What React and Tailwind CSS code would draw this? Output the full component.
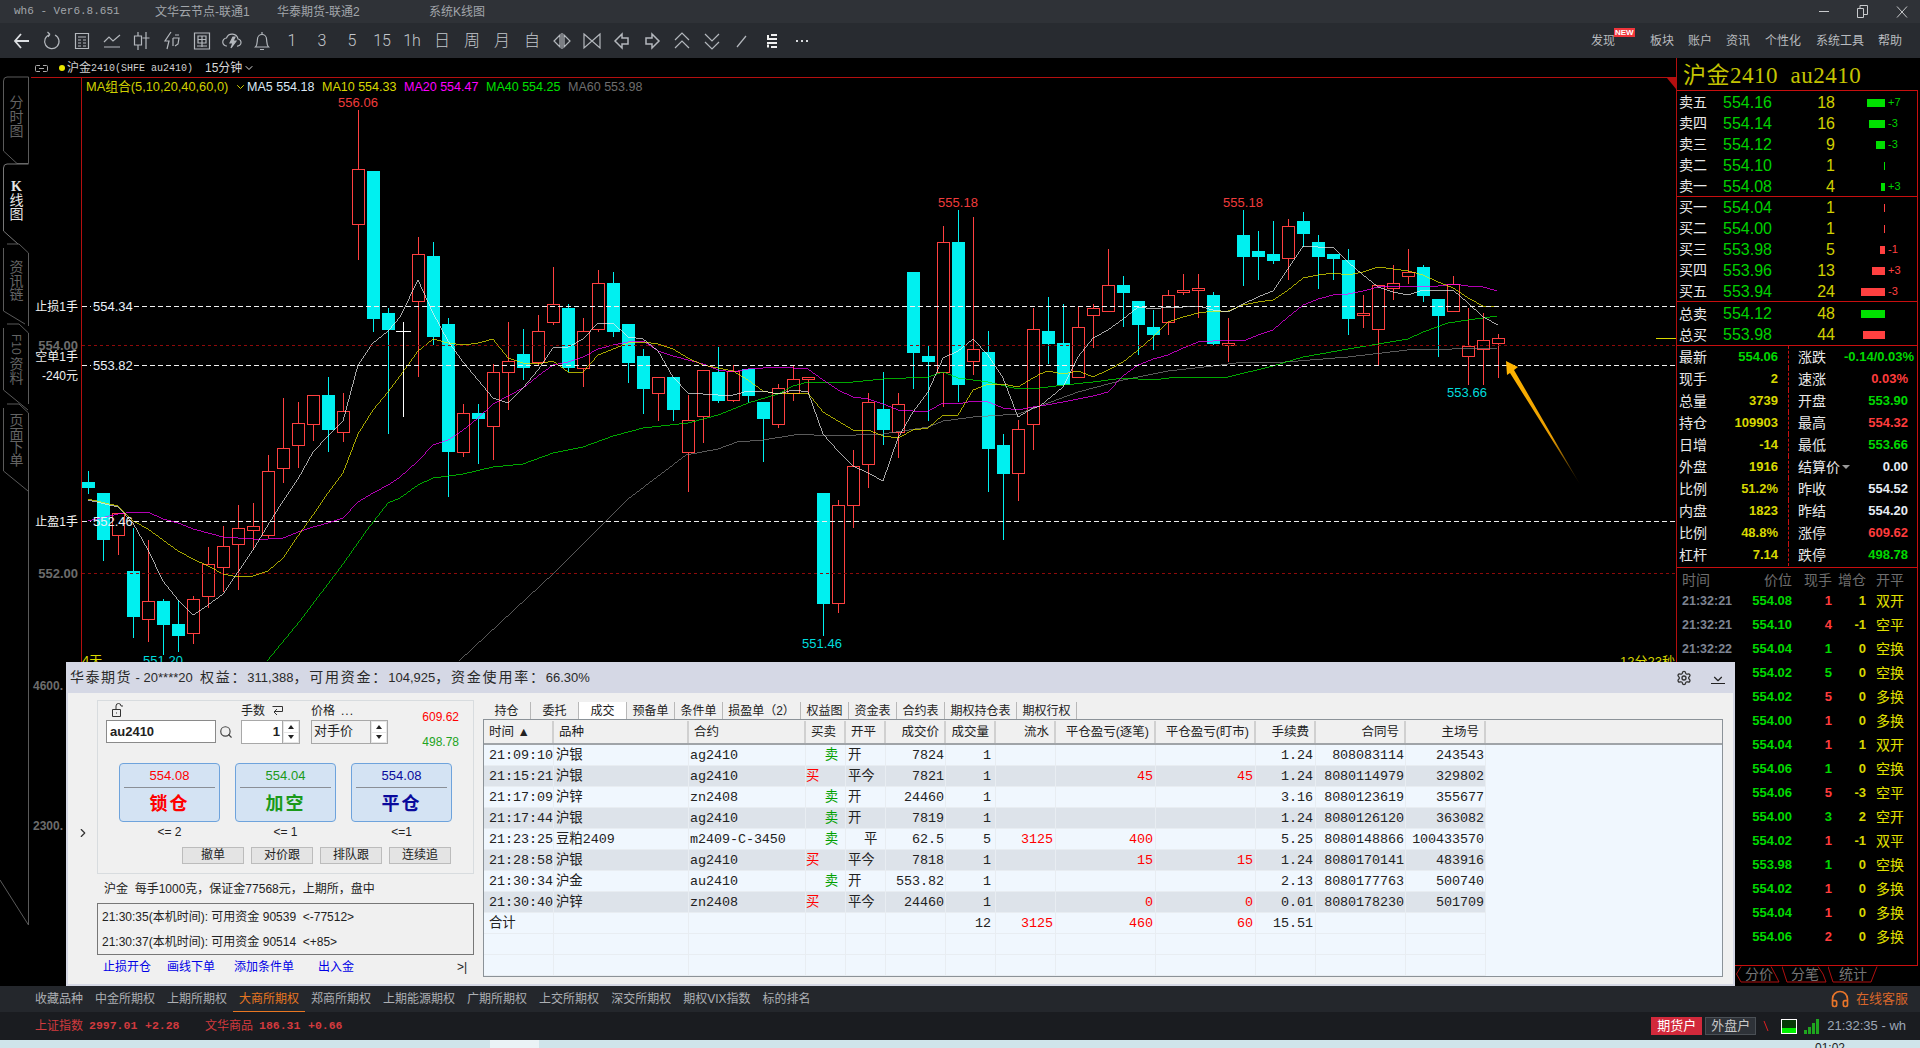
import React from 'react';
import { Settings, Search, ChevronRight, ChevronDown, Headphones } from 'lucide-react';

// candle data: [center x, type, body top, body bottom, high, low]
const candles = [
  [88, 'c', 482, 488, 471, 494], [103, 'c', 493, 540, 493, 561], [118, 'r', 513, 535, 513, 555], [133, 'c', 571, 617, 528, 638],
  [148, 'r', 601, 619, 540, 642], [163, 'c', 601, 625, 599, 655], [178, 'c', 624, 636, 600, 652], [193, 'r', 599, 633, 596, 644],
  [208, 'r', 564, 596, 547, 608], [223, 'r', 546, 567, 526, 592], [238, 'r', 528, 544, 505, 590], [253, 'r', 526, 530, 503, 550],
  [268, 'r', 471, 535, 455, 538], [283, 'r', 448, 468, 398, 483], [298, 'r', 423, 445, 402, 468], [313, 'r', 395, 424, 395, 441],
  [328, 'c', 395, 430, 377, 452], [343, 'r', 411, 432, 393, 442], [358, 'r', 169, 224, 110, 260], [373, 'c', 171, 319, 171, 332],
  [388, 'c', 313, 330, 308, 434],
  [418, 'r', 254, 301, 237, 377], [433, 'c', 256, 337, 242, 345], [448, 'c', 324, 452, 318, 497], [463, 'r', 413, 452, 404, 457],
  [478, 'c', 413, 419, 404, 464], [493, 'r', 372, 426, 364, 460], [508, 'r', 361, 372, 322, 410], [523, 'c', 354, 368, 329, 380],
  [538, 'r', 331, 362, 315, 366], [553, 'r', 304, 322, 267, 325], [568, 'c', 308, 368, 304, 372], [583, 'r', 331, 368, 318, 387],
  [598, 'r', 283, 329, 270, 332], [613, 'c', 283, 332, 272, 337], [628, 'c', 324, 363, 324, 383], [643, 'c', 356, 389, 349, 414],
  [658, 'r', 377, 393, 377, 421], [673, 'c', 377, 410, 377, 421], [688, 'r', 420, 452, 395, 492], [703, 'r', 370, 416, 370, 443],
  [718, 'c', 372, 401, 347, 403], [733, 'r', 371, 400, 365, 402], [748, 'c', 369, 396, 369, 403], [763, 'c', 402, 419, 402, 462],
  [778, 'r', 388, 424, 384, 428], [793, 'r', 379, 393, 366, 401], [808, 'r', 377, 379, 377, 394], [823, 'c', 493, 604, 493, 636],
  [838, 'r', 505, 603, 500, 613], [853, 'r', 466, 505, 450, 528], [868, 'r', 402, 464, 393, 488], [883, 'c', 409, 430, 372, 445],
  [898, 'r', 404, 432, 393, 458], [913, 'c', 272, 353, 272, 389], [928, 'c', 356, 362, 345, 421], [943, 'r', 242, 372, 226, 407],
  [958, 'c', 242, 385, 210, 402], [973, 'r', 349, 361, 217, 375], [988, 'c', 352, 449, 331, 492], [1003, 'c', 445, 474, 434, 540],
  [1018, 'r', 429, 473, 420, 501], [1033, 'r', 329, 424, 308, 450], [1048, 'c', 331, 344, 297, 364], [1063, 'c', 343, 385, 304, 385],
  [1078, 'r', 327, 377, 307, 377], [1093, 'r', 308, 315, 304, 348], [1108, 'r', 285, 311, 249, 311], [1123, 'c', 285, 293, 276, 327],
  [1138, 'c', 301, 325, 301, 355], [1153, 'c', 327, 335, 310, 350], [1168, 'r', 295, 322, 290, 335], [1183, 'r', 290, 292, 274, 295],
  [1198, 'r', 288, 290, 274, 318], [1213, 'c', 295, 344, 292, 345], [1228, 'r', 343, 345, 318, 362], [1243, 'c', 235, 257, 210, 286],
  [1258, 'c', 251, 257, 231, 280], [1273, 'c', 254, 261, 221, 264], [1288, 'r', 226, 258, 219, 280], [1303, 'c', 221, 234, 212, 247],
  [1318, 'c', 242, 257, 235, 289], [1333, 'c', 254, 259, 254, 280], [1348, 'c', 260, 319, 249, 335], [1363, 'r', 313, 315, 295, 328],
  [1378, 'r', 285, 329, 285, 366], [1393, 'r', 283, 288, 265, 300], [1408, 'r', 272, 276, 249, 284], [1423, 'c', 267, 296, 265, 302],
  [1438, 'c', 299, 316, 299, 357], [1453, 'r', 284, 311, 276, 311], [1468, 'r', 346, 356, 308, 385], [1483, 'r', 340, 349, 313, 385],
  [1498, 'r', 338, 343, 334, 378],
];

const ma5 = '88,500 118,507 133,523 148,550 163,581 178,600 193,615 208,605 223,594 238,572 253,550 268,525 283,501 298,479 313,452 328,436 343,421 358,365 373,343 388,331 400,317 418,280 433,313 448,341 463,362 478,380 493,398 508,403 523,388 538,370 553,348 568,347 583,339 598,323 613,323 628,337 643,339 658,351 673,377 688,393 703,394 718,395 733,395 748,391 763,391 778,394 793,390 808,392 823,434 838,451 853,466 868,473 883,481 898,438 913,412 928,392 943,358 958,351 973,339 988,355 1003,378 1018,417 1033,408 1040,406 1063,387 1078,357 1093,338 1108,330 1123,319 1138,307 1153,309 1168,307 1183,307 1198,306 1213,310 1228,312 1243,304 1258,297 1273,291 1288,269 1303,246 1318,247 1333,247 1348,262 1363,275 1378,287 1393,292 1408,295 1423,290 1438,290 1453,290 1468,303 1483,317 1498,325';
const ma10 = '88,499 118,506 133,521 148,529 163,540 178,551 193,559 208,566 223,574 238,577 253,576 268,571 283,558 298,536 313,515 328,493 343,473 358,434 373,410 388,392 400,376 418,351 433,339 448,343 463,345 478,343 493,339 508,358 523,363 538,364 553,361 568,372 583,372 598,355 613,349 628,343 643,342 658,344 673,349 688,358 703,365 718,368 733,371 748,380 763,391 778,394 793,393 808,393 823,412 838,421 853,430 868,430 883,436 898,438 913,430 928,428 943,415 958,415 973,390 988,384 1003,384 1018,387 1033,378 1040,374 1048,371 1063,374 1078,371 1093,377 1108,370 1123,362 1138,350 1153,337 1168,322 1183,317 1198,313 1213,311 1228,311 1243,305 1258,302 1273,300 1288,290 1303,278 1318,275 1333,273 1348,275 1363,272 1378,267 1393,269 1408,271 1423,275 1438,282 1453,288 1468,298 1483,306 1497,307';
const ma20 = '88,521 118,514 133,512 148,512 163,519 178,523 193,529 208,533 223,537 238,538 253,539 268,539 283,538 298,532 313,527 328,523 343,518 358,502 373,493 388,485 400,477 418,461 433,445 448,440 463,430 478,418 493,404 508,396 523,388 538,376 553,365 568,362 583,357 598,349 613,345 628,342 643,341 658,351 673,356 688,360 703,364 718,370 733,372 748,369 763,368 778,367 793,368 808,369 823,380 838,390 853,397 868,399 883,404 898,410 913,411 928,411 943,403 958,404 973,401 988,402 1003,408 1018,410 1033,407 1040,406 1063,402 1078,399 1093,396 1108,392 1123,376 1138,365 1153,359 1168,355 1183,348 1198,342 1213,341 1228,340 1243,341 1258,335 1273,330 1288,317 1303,305 1318,299 1333,295 1348,294 1363,291 1378,287 1393,286 1408,286 1423,286 1438,286 1453,284 1468,286 1483,287 1497,291';
const ma40 = '267,661 300,621 343,564 367,530 388,503 400,498 418,485 433,478 463,474 493,467 523,464 553,453 583,447 613,436 643,428 688,423 718,415 748,403 778,394 793,386 808,382 853,382 883,379 928,377 943,372 958,378 988,382 1018,389 1040,388 1064,385 1093,382 1123,378 1153,380 1177,377 1228,377 1273,366 1303,357 1348,349 1378,344 1408,339 1423,332 1448,323 1468,320 1497,316';
const ma60 = '459,661 555,572 628,499 686,455 718,449 737,442 763,440 800,434 828,436 883,434 928,427 943,421 973,417 1018,414 1040,406 1078,392 1123,380 1168,371 1213,366 1243,362 1285,362 1348,357 1407,350 1497,348';

const asks = [
  ['卖五', '554.16', '18', 'w-[18px]', '+7', true], ['卖四', '554.14', '16', 'w-[16px]', '-3', true], ['卖三', '554.12', '9', 'w-[9px]', '-3', true],
  ['卖二', '554.10', '1', 'w-[1px]', '', true], ['卖一', '554.08', '4', 'w-[4px]', '+3', true],
];
const bids = [
  ['买一', '554.04', '1', 'w-[1px]', '', false], ['买二', '554.00', '1', 'w-[1px]', '', false], ['买三', '553.98', '5', 'w-[5px]', '-1', false],
  ['买四', '553.96', '13', 'w-[13px]', '+3', false], ['买五', '553.94', '24', 'w-[24px]', '-3', false],
];
const totals = [['总卖', '554.12', '48', 'w-[24px]', '', true], ['总买', '553.98', '44', 'w-[22px]', '', false]];

const G = 'text-[#00d800]', R = 'text-[#ff3c3c]', Y = 'text-[#d8d800]', W = 'text-[#e6ecf4]';
const stats = [
  ['最新', '554.06', G, '涨跌', '-0.14/0.03%', G], ['现手', '2', Y, '速涨', '0.03%', R], ['总量', '3739', Y, '开盘', '553.90', G],
  ['持仓', '109903', Y, '最高', '554.32', R], ['日增', '-14', Y, '最低', '553.66', G], ['外盘', '1916', Y, '结算价', '0.00', W],
  ['比例', '51.2%', Y, '昨收', '554.52', W], ['内盘', '1823', Y, '昨结', '554.20', W], ['比例', '48.8%', Y, '涨停', '609.62', R],
  ['杠杆', '7.14', Y, '跌停', '498.78', G],
];

const trades = [
  ['21:32:21', '554.08', '1', R, '1', '双开'], ['21:32:21', '554.10', '4', R, '-1', '空平'], ['21:32:22', '554.04', '1', G, '0', '空换'],
  ['', '554.02', '5', G, '0', '空换'], ['', '554.02', '5', R, '0', '多换'], ['', '554.00', '1', R, '0', '多换'], ['', '554.04', '1', R, '1', '双开'],
  ['', '554.06', '1', G, '0', '空换'], ['', '554.06', '5', R, '-3', '空平'], ['', '554.00', '3', G, '2', '空开'], ['', '554.02', '1', R, '-1', '双平'],
  ['', '553.98', '1', G, '0', '空换'], ['', '554.02', '1', R, '0', '多换'], ['', '554.04', '1', R, '0', '多换'], ['', '554.06', '2', R, '0', '多换'],
];

const columns = [
  { w: 'w-[70px]', c: 'text-left pl-[5px]', h: 'text-left pl-[5px]' },
  { w: 'w-[135px]', c: 'text-left pl-[2px]', h: 'text-left pl-[5px]' },
  { w: 'w-[117px]', c: 'text-left pl-[1px]', h: 'text-left pl-[5px]' },
  { w: 'w-[40px]', c: 'text-left', h: 'text-left pl-[5px]' },
  { w: 'w-[40px]', c: 'text-left pl-[2px]', h: 'text-left pl-[5px]' },
  { w: 'w-[60px]', c: 'text-right pr-[1px]', h: 'text-right pr-[5px]' },
  { w: 'w-[50px]', c: 'text-right pr-[4px]', h: 'text-right pr-[5px]' },
  { w: 'w-[60px]', c: 'text-right pr-[2px] text-[#ff0000]', h: 'text-right pr-[5px]' },
  { w: 'w-[100px]', c: 'text-right pr-[2px] text-[#ff0000]', h: 'text-right pr-[5px]' },
  { w: 'w-[100px]', c: 'text-right pr-[2px] text-[#ff0000]', h: 'text-right pr-[5px]' },
  { w: 'w-[60px]', c: 'text-right pr-[2px]', h: 'text-right pr-[5px]' },
  { w: 'w-[90px]', c: 'text-right pr-[1px]', h: 'text-right pr-[5px]' },
  { w: 'w-[80px]', c: 'text-right pr-[1px]', h: 'text-right pr-[5px]' },
];
const headers = ['时间 ▲', '品种', '合约', '买卖', '开平', '成交价', '成交量', '流水', '平仓盈亏(逐笔)', '平仓盈亏(盯市)', '手续费', '合同号', '主场号'];
const fills = [
  ['21:09:10', '沪银', 'ag2410', '卖', '开', '7824', '1', '', '', '', '1.24', '808083114', '243543'],
  ['21:15:21', '沪银', 'ag2410', '买', '平今', '7821', '1', '', '45', '45', '1.24', '8080114979', '329802'],
  ['21:17:09', '沪锌', 'zn2408', '卖', '开', '24460', '1', '', '', '', '3.16', '8080123619', '355677'],
  ['21:17:44', '沪银', 'ag2410', '卖', '开', '7819', '1', '', '', '', '1.24', '8080126120', '363082'],
  ['21:23:25', '豆粕2409', 'm2409-C-3450', '卖', '平', '62.5', '5', '3125', '400', '', '5.25', '8080148866', '100433570'],
  ['21:28:58', '沪银', 'ag2410', '买', '平今', '7818', '1', '', '15', '15', '1.24', '8080170141', '483916'],
  ['21:30:34', '沪金', 'au2410', '卖', '开', '553.82', '1', '', '', '', '2.13', '8080177763', '500740'],
  ['21:30:40', '沪锌', 'zn2408', '买', '平今', '24460', '1', '', '0', '0', '0.01', '8080178230', '501709'],
  ['合计', '', '', '', '', '', '12', '3125', '460', '60', '15.51', '', ''],
  ['', '', '', '', '', '', '', '', '', '', '', '', ''],
  ['', '', '', '', '', '', '', '', '', '', '', '', ''],
];

const tabs = [
  ['持仓', 'w-[48px]'], ['委托', 'w-[48px]'], ['成交', 'w-[48px]'], ['预备单', 'w-[48px]'], ['条件单', 'w-[48px]'], ['损盈单（2）', 'w-[78px]'],
  ['权益图', 'w-[48px]'], ['资金表', 'w-[48px]'], ['合约表', 'w-[48px]'], ['期权持仓表', 'w-[72px]'], ['期权行权', 'w-[60px]'],
];

const navItems = ['收藏品种', '中金所期权', '上期所期权', '大商所期权', '郑商所期权', '上期能源期权', '广期所期权', '上交所期权', '深交所期权', '期权VIX指数', '标的排名'];

// toolbar icons, drawn on a 20x20 grid
const ToolIcon = ({ children }) => (
  <svg width="20" height="20" viewBox="0 0 20 20" fill="none" stroke="#b4b8bd" strokeWidth="1.2">{children}</svg>
);

const toolbar = [
  <ToolIcon key="a"><path d="M17 10H3M9 3l-6 7 6 7" stroke="#dcdfe2" strokeWidth="1.8" /></ToolIcon>,
  <ToolIcon key="b"><path d="M8 3.5A7.2 7.2 0 1 0 13 4M8 3.5L5.5 1M8 3.5L6 6" /></ToolIcon>,
  <ToolIcon key="c"><path d="M3.5 2.5h13v15h-13zM6 6h8M6 9h3M11 9h3M6 12h3M11 12h3M6 15h3M11 15h3" /></ToolIcon>,
  <ToolIcon key="d"><path d="M2 11l5-5 4 4 7-6M2 16h16" /></ToolIcon>,
  <ToolIcon key="e"><path d="M6 1v4M6 14v5M2.5 5h7v9h-7zM14 1v3M14 12v6M14 4v8M10.500 7h7" /></ToolIcon>,
  <ToolIcon key="f"><path d="M9 1L3 10h4l-2 8M13 4h4M11 7h6l-1 6-3 2M11 7v8" /></ToolIcon>,
  <ToolIcon key="g"><path d="M2.500 2h15v16h-15zM6 5h8v7H6zM6 8.500h8M10 5v11M5 15h10" /></ToolIcon>,
  <ToolIcon key="h"><path d="M5 15a4 4 0 0 1-.5-8A6 6 0 0 1 16 8a3.500 3.500 0 0 1-1 7" /><path d="M11 6l-3 6h3l-2 5 5-7h-3l2-4z" fill="#b4b8bd" /></ToolIcon>,
  <ToolIcon key="i"><path d="M3.500 16c2-2 1.500-5 2-8a4.500 4.500 0 0 1 9 0c.5 3 0 6 2 8zM8 18.500h4M10 1v2" /></ToolIcon>,
  '1', '3', '5', '15', '1h', '日', '周', '月', '自',
  <ToolIcon key="j"><path d="M8 4L2 10l6 6zM12 4l6 6-6 6zM10 2v16" /></ToolIcon>,
  <ToolIcon key="k"><path d="M2 3l8 7-8 7zM18 3l-8 7 8 7z" /></ToolIcon>,
  <ToolIcon key="l"><path d="M10 3l-7 7 7 7v-4h6V7h-6z" strokeWidth="1.5" /></ToolIcon>,
  <ToolIcon key="m"><path d="M10 3l7 7-7 7v-4H4V7h6z" strokeWidth="1.5" /></ToolIcon>,
  <ToolIcon key="n"><path d="M3 9l7-7 7 7M3 17l7-7 7 7" /></ToolIcon>,
  <ToolIcon key="o"><path d="M3 3l7 7 7-7M3 11l7 7 7-7" /></ToolIcon>,
  <ToolIcon key="p"><path d="M5 16l9-11" /></ToolIcon>,
  <ToolIcon key="q"><path d="M9 4h6M5 8h10M5 12h10M9 16h6" stroke="#f0f0f0" strokeWidth="2" /><path d="M5 5.500h2M5 15h2" stroke="#f0f0f0" strokeWidth="3" /></ToolIcon>,
  <ToolIcon key="r"><path d="M4 10h2M9 10h2M14 10h2" stroke="#d8dadd" strokeWidth="2" /></ToolIcon>,
];

const Candle = ({ d }) => {
  const [x, type, top, bot, hi, lo] = d;
  if (type === 'c') {
    return (
      <g fill="#00f0f0">
        <rect x={x} y={hi} width="1" height={lo - hi} />
        <rect x={x - 6} y={top} width="13" height={bot - top} />
      </g>
    );
  }
  return (
    <g stroke="#ff4040" fill="none">
      <path d={`M${x + 0.5} ${hi}V${top}M${x + 0.5} ${bot}V${lo}`} />
      <rect x={x - 5.5} y={top + 0.5} width="12" height={Math.max(bot - top, 2)} fill="#000" />
    </g>
  );
};

const ChartCanvas = () => (
  <svg className="absolute inset-0" width="1677" height="928" viewBox="0 58 1677 928" fontSize="12">
    <defs>
      <linearGradient id="arrowFade" x1="1508" y1="365" x2="1581" y2="486" gradientUnits="userSpaceOnUse">
        <stop offset="0" stopColor="#ffb400" />
        <stop offset="0.6" stopColor="#e89c00" />
        <stop offset="1" stopColor="#000" />
      </linearGradient>
    </defs>

    {/* side tabs */}
    <g stroke="#5a5a5a" fill="none">
      <path d="M3.500 81Q3.500 77 7 77H28.500V163.500H17L3.500 151Z" />
      <path d="M28.500 164H7Q3.500 164 3.500 168V231L18 244" stroke="#777" />
      <path d="M7 244H19L28.500 253V326M3.500 248V311L25 324" />
      <path d="M7 324H19L28.500 333V404M3.500 328V390L28 410" />
      <path d="M7 404H19L28.500 413V925L0 880M3.500 408V471L28 491" />
    </g>
    <g fill="#636363" fontSize="14" textAnchor="middle">
      <text x="16.500" y="107">分</text><text x="16.500" y="122">时</text><text x="16.500" y="136">图</text>
      <text x="16.500" y="191" fill="#e6e6e6" fontWeight="700" fontFamily="'Liberation Serif',serif">K</text><text x="16.500" y="205" fill="#e6e6e6">线</text><text x="16.500" y="219" fill="#e6e6e6">图</text>
      <text x="16.500" y="272">资</text><text x="16.500" y="286">讯</text><text x="16.500" y="299">链</text>
      <text transform="translate(12 334) rotate(90)" fontSize="12" textAnchor="start">F10</text><text x="16.500" y="369">资</text><text x="16.500" y="383">料</text>
      <text x="16.500" y="425">页</text><text x="16.500" y="439">面</text><text x="16.500" y="452">下</text><text x="16.500" y="465">单</text>
    </g>
    <text x="33" y="690" fill="#6c6c6c" fontWeight="700">4600.</text>
    <text x="33" y="830" fill="#6c6c6c" fontWeight="700">2300.</text>

    {/* frame */}
    <g stroke="#b40f0f" shapeRendering="crispEdges">
      <path d="M31 77.500H1677M81.500 77V662M1676.500 58V986" />
    </g>
    <path d="M1667 78H1676V89Z" fill="#b40f0f" />
    <path d="M1656 338.500H1676" stroke="#d8d800" shapeRendering="crispEdges" />

    <g shapeRendering="crispEdges">
      {candles.map((d) => <Candle key={d[0]} d={d} />)}
      <path d="M403.500 322V417M396 331.500H411" stroke="#fff" />
    </g>

    <g fill="none" strokeWidth="0.7" shapeRendering="crispEdges">
      <polyline points={ma60} stroke="#808080" />
      <polyline points={ma40} stroke="#00ee00" />
      <polyline points={ma20} stroke="#ff00ff" />
      <polyline points={ma10} stroke="#eeee00" />
      <polyline points={ma5} stroke="#f0f0f0" />
    </g>

    <g shapeRendering="crispEdges">
      <path d="M82 306.500H91M134 306.500H1677M82 365.500H91M134 365.500H1677M82 521.500H91M134 521.500H1677" stroke="#f0f0f0" strokeDasharray="5 3" />
      <path d="M82 345.500H1677M82 573.500H1677" stroke="#8e0a0a" strokeDasharray="3 3" />
    </g>

    <polygon points="1506,361 1518,367 1514,370 1581,486 1510,373 1507,375" fill="url(#arrowFade)" />

    {/* price labels */}
    <g fontSize="13">
      <text x="358" y="107" textAnchor="middle" fill="#f03c3c">556.06</text>
      <text x="958" y="207" textAnchor="middle" fill="#f03c3c">555.18</text>
      <text x="1243" y="207" textAnchor="middle" fill="#f03c3c">555.18</text>
      <text x="822" y="648" textAnchor="middle" fill="#00dcdc">551.46</text>
      <text x="1467" y="397" textAnchor="middle" fill="#00dcdc">553.66</text>
      <text x="163" y="665" textAnchor="middle" fill="#00dcdc">551.20</text>
      <text x="82" y="665" fill="#d8d800">4天</text>
      <text x="1620" y="666" fill="#d8d800">12分23秒</text>
      <text x="78" y="311" fontSize="12" textAnchor="end" fill="#f0f0f0">止损1手</text>
      <text x="93" y="311" fill="#e8f0f8">554.34</text>
      <text x="78" y="350" textAnchor="end" fill="#6c6c6c" fontWeight="700">554.00</text>
      <text x="78" y="361" fontSize="12" textAnchor="end" fill="#f0f0f0">空单1手</text>
      <text x="93" y="370" fill="#e8f0f8">553.82</text>
      <text x="78" y="380" fontSize="12" textAnchor="end" fill="#f0f0f0">-240元</text>
      <text x="78" y="526" fontSize="12" textAnchor="end" fill="#f0f0f0">止盈1手</text>
      <text x="93" y="526" fill="#e8f0f8">552.46</text>
      <text x="78" y="578" textAnchor="end" fill="#6c6c6c" fontWeight="700">552.00</text>
    </g>
  </svg>
);

const QuoteRow = ({ r }) => (
  <div className="flex h-[21px] shrink-0 items-center">
    <span className="w-[46px] pl-[2px] text-[14px] text-[#e8e8e8]">{r[0]}</span>
    <span className="w-[68px] text-[16px] text-[#00d000]">{r[1]}</span>
    <span className="w-[44px] text-right text-[16px] text-[#d0d000]">{r[2]}</span>
    <span className="flex w-[50px] justify-end">
      <span className={`h-[8px] ${r[3]} ${r[5] ? 'bg-[#00e000]' : 'bg-[#ff4040]'}`} />
    </span>
    <span className={`ml-[3px] text-[11px] ${r[5] ? 'text-[#00d000]' : 'text-[#ff4040]'}`}>{r[4]}</span>
  </div>
);

const RightPanel = () => (
  <div className="flex w-[243px] flex-col">
    <div className="h-[32px] shrink-0 pl-[6px] font-['Liberation_Serif','Noto_Sans_CJK_SC',serif] text-[23px] leading-[35px] tracking-[0.5px] whitespace-pre text-[#c4c400]">
      沪金2410  au2410
    </div>
    <div className="mr-[2px] flex h-[876px] shrink-0 flex-col border border-l-0 border-[#c80f0f]">
      <div className="flex h-[106px] shrink-0 flex-col justify-center border-b border-[#c80f0f] pt-[2px]">
        {asks.map((r) => <QuoteRow key={r[0]} r={r} />)}
      </div>
      <div className="flex h-[105px] shrink-0 flex-col justify-center border-b border-[#c80f0f] pt-[1px]">
        {bids.map((r) => <QuoteRow key={r[0]} r={r} />)}
      </div>
      <div className="flex h-[44px] shrink-0 flex-col justify-center border-b border-[#c80f0f] pt-[2px]">
        {totals.map((r) => <QuoteRow key={r[0]} r={r} />)}
      </div>
      <div className="flex h-[222px] shrink-0 flex-col border-b border-[#c80f0f]">
        {stats.map((s, i) => (
          <div key={i} className="flex h-[22px] shrink-0 items-center">
            <span className="w-[46px] pl-[2px] text-[14px] text-[#e8e8e8]">{s[0]}</span>
            <span className={`w-[55px] text-right text-[13px] font-bold ${s[2]}`}>{s[1]}</span>
            <span className="ml-[10px] h-full w-[10px] border-l border-dashed border-[#c80f0f]" />
            <span className="flex w-[46px] items-center text-[14px] whitespace-nowrap text-[#e8e8e8]">
              {s[3]}
              {s[3] === '结算价' && <span className="ml-[2px] border-x-[4px] border-t-[4px] border-x-transparent border-t-[#999]" />}
            </span>
            <span className={`w-[64px] text-right text-[13px] font-bold whitespace-nowrap ${s[5]}`}>{s[4]}</span>
          </div>
        ))}
      </div>
      <div className="flex h-[21px] shrink-0 items-center pt-[3px] text-[14px] text-[#6e6e6e]">
        <span className="w-[44px] pl-[5px]">时间</span>
        <span className="w-[71px] text-right">价位</span>
        <span className="w-[40px] text-right">现手</span>
        <span className="w-[34px] text-right">增仓</span>
        <span className="pl-[10px]">开平</span>
      </div>
      {trades.map((t, i) => (
        <div key={i} className="flex h-[24px] shrink-0 items-center text-[13px] font-bold">
          <span className="w-[59px] pl-[5px] text-[12.500px] text-[#7d8492]">{t[0]}</span>
          <span className="w-[56px] text-right text-[#00d800]">{t[1]}</span>
          <span className={`w-[40px] text-right ${t[3]}`}>{t[2]}</span>
          <span className="w-[34px] text-right text-[#d8d800]">{t[4]}</span>
          <span className="pl-[10px] text-[14px] font-normal text-[#e0e000]">{t[5]}</span>
        </div>
      ))}
    </div>
    <div className="flex h-[20px] items-start pl-[59px] text-[14px] text-[#757575]">
      <span className="relative w-[46px] text-center leading-[16px]">
        <svg className="absolute inset-0" width="46" height="17" fill="none" stroke="#b01010"><path d="M5 .5L.5 8 5 16H43L39 8 35 .5" /></svg>
        分价
      </span>
      <span className="relative w-[46px] text-center leading-[16px]">
        <svg className="absolute inset-0" width="46" height="17" fill="none" stroke="#b01010"><path d="M0 .5L5 16H44L41 8 36 .5" /></svg>
        分笔
      </span>
      <span className="relative w-[50px] text-center leading-[16px]">
        <svg className="absolute inset-0" width="50" height="17" fill="none" stroke="#b01010"><path d="M0 .5L5 16H43L49 .5" /></svg>
        统计
      </span>
    </div>
  </div>
);

const Spinner = ({ w, children }) => (
  <div className={`flex h-[24px] ${w} border border-[#a8a8a8] bg-white`}>
    <div className="flex-1">{children}</div>
    <div className="flex w-[17px] flex-col gap-[1px] border-l border-[#a8a8a8] bg-[#e6e6e6] p-[1px]">
      <span className="flex flex-1 items-center justify-center bg-white">
        <span className="border-x-[3px] border-b-[4px] border-x-transparent border-b-[#222]" />
      </span>
      <span className="flex flex-1 items-center justify-center bg-white">
        <span className="border-x-[3px] border-t-[4px] border-x-transparent border-t-[#222]" />
      </span>
    </div>
  </div>
);

const OrderButton = ({ price, label, color }) => (
  <div className="flex h-[59px] w-[101px] flex-col rounded-[4px] border border-[#6ea3dc] bg-[#d4e3f3]">
    <div className={`h-[23px] text-center text-[13px] leading-[24px] ${color}`}>{price}</div>
    <div className="mx-[4px] h-[1px] bg-[#8a8f96]" />
    <div className={`flex-1 text-center text-[18px] leading-[32px] font-bold tracking-[2px] ${color}`}>{label}</div>
  </div>
);

const OrderForm = () => (
  <div className="flex w-[415px] text-[12px] text-[#222]">
    <div className="flex w-[29px] justify-center pt-[133px]">
      <ChevronRight size={14} color="#333" />
    </div>
    <div className="w-[377px] pt-[7px]">
      <div className="h-[174px] border border-[#d8dcdf]">
        <div className="flex h-[43px] pl-[8px]">
          <div className="w-[135px]">
            <svg className="mt-[2px] ml-[5px]" width="14" height="15" viewBox="0 0 14 15" fill="none" stroke="#333">
              <path d="M1.500 6.500h8v7h-8zM5 10h1M5 6V3a2.500 2.500 0 0 1 5 0h2" />
            </svg>
            <div className="mt-[2px] flex items-center">
              <div className="h-[23px] w-[110px] border border-[#8a8a8a] bg-white pl-[3px] text-[13px] leading-[21px] font-bold">au2410</div>
              <Search size={14} color="#444" strokeWidth={2} className="ml-[3px]" />
            </div>
          </div>
          <div className="w-[70px]">
            <div className="flex h-[19px] items-center gap-[6px]">
              手数
              <svg width="13" height="11" viewBox="0 0 13 11" fill="none" stroke="#333"><path d="M1.500 1.500h10v5H4M6 4L3 7l3 3" /></svg>
            </div>
            <Spinner w="w-[59px]">
              <div className="pr-[2px] text-right text-[13px] leading-[22px] font-bold">1</div>
            </Spinner>
          </div>
          <div className="w-[77px]">
            <div className="flex h-[19px] items-center gap-[6px]">价格 <span className="tracking-[1px]">...</span></div>
            <Spinner w="w-[77px]">
              <div className="h-full bg-[#f0f0f0] pl-[2px] text-[13px] leading-[20px]">对手价</div>
            </Spinner>
          </div>
          <div className="w-[71px] pt-[9px] text-right text-[12px] leading-[14px]">
            <div className="text-[#ff0000]">609.62</div>
            <div className="mt-[11px] text-[#22a322]">498.78</div>
          </div>
        </div>
        <div className="mt-[19px] flex gap-[15px] pl-[21px]">
          <OrderButton price="554.08" label="锁仓" color="text-[#ff0000]" />
          <OrderButton price="554.04" label="加空" color="text-[#1a9a1a]" />
          <OrderButton price="554.08" label="平仓" color="text-[#0a0a9c]" />
        </div>
        <div className="mt-[2px] flex h-[17px] gap-[15px] pl-[21px] leading-[17px]">
          <span className="w-[101px] text-center">&lt;= 2</span>
          <span className="w-[101px] text-center">&lt;= 1</span>
          <span className="w-[101px] text-center">&lt;=1</span>
        </div>
        <div className="mt-[6px] flex justify-end gap-[7px] pr-[22px]">
          {['撤单', '对价跟', '排队跟', '连续追'].map((b) => (
            <div key={b} className="h-[17px] w-[62px] border border-[#bcbcbc] bg-[#e4e4e4] text-center leading-[15px]">{b}</div>
          ))}
        </div>
      </div>
      <div className="h-[29px] pl-[7px] leading-[31px]">沪金 &nbsp;每手1000克，保证金77568元，上期所，盘中</div>
      <div className="flex h-[52px] flex-col justify-around border border-[#777] px-[4px]">
        <div>21:30:35(本机时间): 可用资金 90539 &nbsp;&lt;-77512&gt;</div>
        <div>21:30:37(本机时间): 可用资金 90514 &nbsp;&lt;+85&gt;</div>
      </div>
      <div className="flex h-[24px] items-center pl-[6px] text-[#0000e6]">
        <span className="w-[64px]">止损开仓</span>
        <span className="w-[67px]">画线下单</span>
        <span className="w-[84px]">添加条件单</span>
        <span>出入金</span>
        <span className="ml-auto pr-[7px] text-[#222]">&gt;|</span>
      </div>
    </div>
  </div>
);

const FillsTable = () => (
  <div className="flex-1 pt-[9px] text-[13px] text-[#222]">
    <div className="flex h-[17px] items-end">
      {tabs.map(([t, w]) => (
        <div key={t} className={`flex h-[17px] ${w} items-center justify-center whitespace-nowrap border-r border-[#b8b8b8] pt-[1px] text-[12px] leading-none ${t === '成交' ? 'bg-white' : ''}`}>{t}</div>
      ))}
    </div>
    <div className="mr-[10px] h-[258px] overflow-hidden border border-[#8b9298] bg-[#f0f7fe]">
      <div className="flex h-[25px] items-center border-b-2 border-[#a0a4a8] bg-[#f0f0f0]">
        {columns.map((c, i) => (
          <div key={i} className={`h-[22px] ${c.w} ${c.h} border-r-2 border-[#d0d0d0] whitespace-nowrap text-[12.500px] leading-[23px]`}>{headers[i]}</div>
        ))}
      </div>
      {fills.map((row, i) => (
        <div key={i} className="flex h-[21px] items-center font-['Liberation_Mono','Noto_Sans_CJK_SC',monospace] text-[13.400px] tracking-[-0.05px]">
          {row.map((v, j) => {
            let color = '';
            if (v === '买') color = 'text-[#ff0000]';
            if (v === '卖') color = 'text-right pr-[7px] text-[#00a000]';
            if (j === 4 && v === '平') color = 'pl-[18px]';
            if (v === '0') color = 'text-[#222]';
            return (
              <div key={j} className={`h-[21px] ${columns[j].w} ${columns[j].c} ${color} whitespace-nowrap border-r border-b border-[#e8edf2] leading-[22px] ${i % 2 === 1 && i < 8 ? 'bg-[#dde3ea]' : ''}`}>{v}</div>
            );
          })}
        </div>
      ))}
    </div>
  </div>
);

const TradePanel = () => (
  <div className="absolute top-[604px] left-[66px] z-10 flex h-[324px] w-[1669px] flex-col border-x-2 border-b-2 border-[#d5d8e5] bg-[#f0f0f0]">
    <div className="flex h-[31px] shrink-0 items-center bg-[#d5d8e5] pr-[8px] pl-[2px] text-[14px] whitespace-pre text-[#2a2a2a]">
      <span className="tracking-[1.500px]">华泰期货</span>
      <span className="text-[13px]"> - 20****20 &nbsp;</span>
      <span className="tracking-[1.800px]">权益：</span>
      <span className="text-[13px]">311,388</span>
      <span className="tracking-[1.800px]">，可用资金：</span>
      <span className="text-[13px]">104,925</span>
      <span className="tracking-[1.800px]">，资金使用率：</span>
      <span className="text-[13px]">66.30%</span>
      <Settings size={16} color="#333" strokeWidth={2} className="mr-[19px] ml-auto" />
      <span className="flex flex-col items-center">
        <ChevronDown size={14} color="#222" />
        <span className="-mt-[3px] h-[1px] w-[14px] bg-[#222]" />
      </span>
    </div>
    <div className="flex flex-1">
      <OrderForm />
      <FillsTable />
    </div>
  </div>
);

export default function App() {
  return (
    <div className="flex h-[1048px] w-[1920px] flex-col overflow-hidden bg-black font-['Liberation_Sans','Noto_Sans_CJK_SC',sans-serif]">
      {/* title bar */}
      <div className="flex h-[23px] items-center bg-[#2f3237] pl-[14px] text-[12px] text-[#a2a6ab]">
        <span className="w-[141px] font-['Liberation_Mono','Noto_Sans_CJK_SC',monospace] text-[11px]">wh6 - Ver6.8.651</span>
        <span className="w-[122px]">文华云节点-联通1</span>
        <span className="w-[152px]">华泰期货-联通2</span>
        <span>系统K线图</span>
        <span className="ml-auto flex items-center pr-[12px] text-[#c8cacc]">
          <span className="h-[1px] w-[10px] bg-[#c8cacc]" />
          <svg className="ml-[28px]" width="11" height="13" viewBox="0 0 11 13" fill="none" stroke="#c8cacc"><path d="M.5 3.500h6v9h-6zM3 3V.5h7.500v9H7" /></svg>
          <svg className="ml-[28px]" width="12" height="12" viewBox="0 0 12 12" fill="none" stroke="#c8cacc"><path d="M1 .5l10 11M11 .5L1 11.500" /></svg>
        </span>
      </div>

      {/* toolbar */}
      <div className="flex h-[35px] items-center bg-[#282b30] pl-[7px]">
        {toolbar.map((item, i) => (
          <span key={i} className="flex w-[30px] items-center justify-center font-['Roboto','Noto_Sans_CJK_SC',sans-serif] text-[16px] font-light text-[#c4c8cd]">{item}</span>
        ))}
        <div className="ml-auto flex items-center pr-[18px] text-[12px] text-[#b8bbbf]">
          <span className="relative mr-[35px]">
            发现
            <span className="absolute -top-[4px] left-[23px] bg-[#f0353b] px-[1px] text-[8px] leading-[9px] font-bold text-white">NEW</span>
          </span>
          <span className="mr-[14px]">板块</span>
          <span className="mr-[14px]">账户</span>
          <span className="mr-[15px]">资讯</span>
          <span className="mr-[15px]">个性化</span>
          <span className="mr-[14px]">系统工具</span>
          <span>帮助</span>
        </div>
      </div>

      {/* chart + quote panel */}
      <div className="relative flex h-[928px] bg-black">
        <div className="relative w-[1677px]">
          <ChartCanvas />
          <div className="relative flex h-[20px] items-center pl-[35px] text-[12px] text-[#c8c8c8]">
            <svg width="13" height="7" viewBox="0 0 13 7" fill="none" stroke="#aaa"><path d="M5 .5H1.500a1 1 0 0 0-1 1v4a1 1 0 0 0 1 1H5M8 .5h3.500a1 1 0 0 1 1 1v4a1 1 0 0 1-1 1H8M4 3.500h5" /></svg>
            <span className="mr-[2px] ml-[11px] h-[6px] w-[6px] rounded-full bg-[#e6e600]" />
            <span className="flex w-[138px] items-center whitespace-pre text-[#d0d0d0]">
              沪金<span className="font-['Liberation_Mono',monospace] text-[10px]">2410(SHFE au2410)</span>
            </span>
            <span className="text-[#d8d8d8]">15分钟</span>
            <ChevronDown size={12} color="#ddd" className="ml-[1px]" />
          </div>
          <div className="relative flex h-[18px] items-center pl-[86px] text-[12.500px] whitespace-nowrap">
            <span className="w-[148px] text-[12.800px] text-[#d0d000]">MA组合(5,10,20,40,60,0)</span>
            <ChevronDown size={12} color="#d0d000" className="w-[13px]" />
            <span className="w-[75px] text-[#dce8f4]">MA5 554.18</span>
            <span className="w-[82px] text-[#d8d800]">MA10 554.33</span>
            <span className="w-[82px] text-[#ff00ff]">MA20 554.47</span>
            <span className="w-[82px] text-[#00e000]">MA40 554.25</span>
            <span className="text-[#6e6e6e]">MA60 553.98</span>
          </div>
        </div>
        <RightPanel />
        <TradePanel />
      </div>

      {/* market tabs */}
      <div className="flex h-[26px] items-center bg-[#24272c] pl-[29px] text-[12px] text-[#adb0b4]">
        {navItems.map((n) => (
          <span key={n} className={`flex h-[26px] items-center px-[6px] ${n === '大商所期权' ? 'border-b border-[#e87722] text-[#e87722]' : ''}`}>{n}</span>
        ))}
        <span className="ml-auto flex items-center gap-[6px] pr-[12px] text-[13px] text-[#d8662a]">
          <Headphones size={20} color="#e8752a" />
          在线客服
        </span>
      </div>

      {/* status bar */}
      <div className="flex h-[28px] items-center bg-[#1a1c20] pl-[35px] text-[12px] text-[#d23a3e]">
        <span className="w-[54px]">上证指数</span>
        <span className="w-[56px] font-['Liberation_Mono',monospace] text-[11.500px] font-bold">2997.01</span>
        <span className="w-[60px] font-['Liberation_Mono',monospace] text-[11.500px] font-bold">+2.28</span>
        <span className="w-[54px]">文华商品</span>
        <span className="w-[49px] font-['Liberation_Mono',monospace] text-[11.500px] font-bold">186.31</span>
        <span className="font-['Liberation_Mono',monospace] text-[11.500px] font-bold">+0.66</span>
        <span className="ml-auto flex items-center pr-[14px]">
          <span className="h-[18px] w-[51px] bg-[#d2293b] text-center text-[13px] leading-[18px] text-white">期货户</span>
          <span className="ml-[3px] h-[18px] w-[51px] border border-[#4a4f55] bg-[#2e3238] text-center text-[13px] leading-[16px] text-[#c8c8c8]">外盘户</span>
          <svg className="ml-[7px]" width="6" height="12" viewBox="0 0 6 12" stroke="#e02020" fill="none"><path d="M1 1l4 10" /></svg>
          <span className="ml-[12px] flex h-[15px] w-[16px] flex-col justify-end border border-white bg-[#063a06]">
            <span className="h-[5px] bg-[#00f000]" />
          </span>
          <span className="ml-[7px] flex h-[15px] items-end gap-[1px]">
            <span className="h-[4px] w-[3px] bg-[#1fa51f]" />
            <span className="h-[7px] w-[3px] bg-[#1fa51f]" />
            <span className="h-[11px] w-[3px] bg-[#1fa51f]" />
            <span className="h-[15px] w-[3px] bg-[#1fa51f]" />
          </span>
          <span className="ml-[8px] text-[13px] text-[#9ca6b6]">21:32:35 - wh</span>
        </span>
      </div>

      {/* taskbar edge */}
      <div className="flex h-[8px] overflow-hidden bg-[#cfe4ea]">
        <span className="ml-[490px] w-[49px] bg-[#eaf3f6]" />
        <span className="ml-[1276px] text-[12px] leading-[16px] text-[#222]">01:02</span>
      </div>
    </div>
  );
}
